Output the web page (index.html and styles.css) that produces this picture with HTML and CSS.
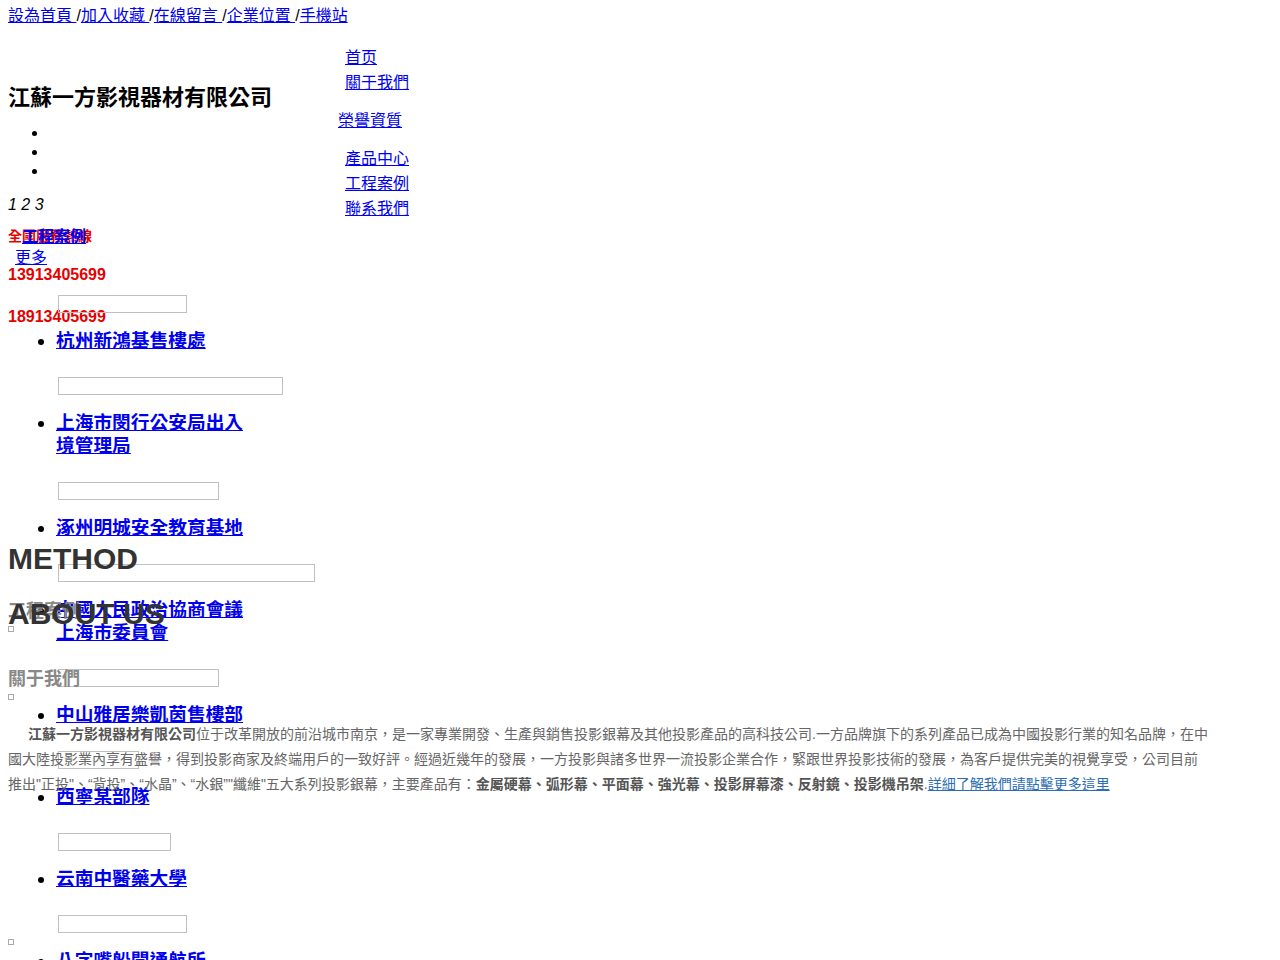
FILE: index.html
```html
<!DOCTYPE html>
<html lang="zh-Hant">
<head>
    <meta charset="UTF-8">
    <meta name="viewport" content="width=device-width, initial-scale=1.0">
    <title>江蘇一方影視器材有限公司</title>
    <link rel="stylesheet" href="styles.css">
</head>
<body>
<div class="page">
    <div class="toplinks">
        <a href="#">設為首頁 </a>/<a href="#">加入收藏 </a>/<a href="#">在線留言 </a>/<a href="#">企業位置 </a>/<a href="#">手機站</a>
    </div>

    <div class="header">
        <div class="left">
            <div class="logo">江蘇一方影視器材有限公司</div>
            <ul class="banner">
                <li></li>
                <li></li>
                <li></li>
            </ul>
            <div class="pager"><i>1 2 3</i></div>

            <div class="hotline">
                <div class="hot-title">全國服務熱線</div>
                <div class="hot-num">13913405699</div>
                <div class="hot-num second">18913405699</div>
            </div>

            <div class="cases">
                <div class="case-title"><a href="#">工程案例</a></div>
                <div class="more"><a href="#">更多</a></div>
                <ul class="case-list">
                    <li><span class="pic" style="width: 127px"></span><h3><a href="#">杭州新鴻基售樓處</a></h3></li>
                    <li><span class="pic" style="width: 223px"></span><h3><a href="#">上海市閔行公安局出入境管理局</a></h3></li>
                    <li><span class="pic" style="width: 159px"></span><h3><a href="#">涿州明城安全教育基地</a></h3></li>
                    <li><span class="pic" style="width: 255px"></span><h3><a href="#">中國人民政治協商會議上海市委員會</a></h3></li>
                    <li><span class="pic" style="width: 159px"></span><h3><a href="#">中山雅居樂凱茵售樓部</a></h3></li>
                    <li><span class="pic" style="width: 79px"></span><h3><a href="#">西寧某部隊</a></h3></li>
                    <li><span class="pic" style="width: 111px"></span><h3><a href="#">云南中醫藥大學</a></h3></li>
                    <li><span class="pic" style="width: 127px"></span><h3><a href="#">八字嘴船閘通航所</a></h3></li>
                </ul>
            </div>
        </div>

        <div class="nav">
            <div class="nav-item"><a href="#">首页</a></div>
            <div class="nav-item"><a href="#">關于我們</a></div>
            <div class="nav-item shifted"><a href="#">榮譽資質</a></div>
            <div class="nav-item"><a href="#">產品中心</a></div>
            <div class="nav-item"><a href="#">工程案例</a></div>
            <div class="nav-item"><a href="#">聯系我們</a></div>
        </div>
    </div>

    <div class="about">
        <h2 class="en">METHOD</h2>
        <div class="cn">工程案例</div>
        <div class="sq"></div>
        <h2 class="en over">ABOUT US</h2>
        <div class="cn second">關于我們</div>
        <div class="sq"></div>
        <p class="intro"><strong>江蘇一方影視器材有限公司</strong>位于改革開放的前沿城市南京，是一家專業開發、生產與銷售投影銀幕及其他投影產品的高科技公司.一方品牌旗下的系列產品已成為中國投影行業的知名品牌，在中國大陸投影業內享有盛譽，得到投影商家及終端用戶的一致好評。經過近幾年的發展，一方投影與諸多世界一流投影企業合作，緊跟世界投影技術的發展，為客戶提供完美的視覺享受，公司目前推出"正投"、“背投”、“水晶”、“水銀”"纖維"五大系列投影銀幕，主要產品有：<strong>金屬硬幕、弧形幕、平面幕、強光幕、投影屏幕漆、反射鏡、投影機吊架</strong>.<a href="#">詳細了解我們請點擊更多這里</a></p>
        <div class="sq last"></div>
    </div>
</div>
</body>
</html>
```

FILE: styles.css
```css
body {
    margin: 0;
    padding: 7px 8px 6px;
    font-family: "Liberation Sans", "Noto Sans CJK TC", sans-serif;
    font-size: 16px;
    color: #000;
    background-color: #fff;
}

a {
    color: #0000ee;
}

.page {
    position: relative;
}

.toplinks {
    line-height: 18px;
}

.header {
    display: flex;
    margin-top: 20px;
}

.left {
    position: relative;
    width: 337px;
}

.logo {
    margin-top: 38px;
    font-size: 22px;
    font-weight: bold;
    line-height: 30px;
}

.banner {
    margin: 10px 0 0;
    padding-left: 40px;
    line-height: 19px;
}

.banner li {
    height: 19px;
}

.pager {
    margin-top: 15px;
    line-height: 20px;
}

/* hotline box sits under the case block */
.hotline {
    position: absolute;
    top: 183px;
    left: 0;
    color: #e60000;
    font-weight: bold;
}

.hot-title {
    font-size: 14px;
    line-height: 16px;
}

.hot-num {
    margin-top: 21px;
    line-height: 20px;
}

.hot-num.second {
    margin-top: 22px;
}

.cases {
    position: relative;
    z-index: 1;
    margin-top: 12px;
}

.case-title {
    padding-left: 14px;
    font-weight: bold;
    line-height: 20px;
}

.more {
    margin-top: 1px;
    padding-left: 7px;
    line-height: 20px;
}

.case-list {
    margin: 27px 0 0;
    padding-left: 48px;
    list-style: none;
}

.case-list li {
    width: 200px;
}

.pic {
    display: block;
    height: 16px;
    margin-left: 2px;
    border: 1px solid #c0c0c0;
}

.case-list h3 {
    display: list-item;
    list-style: disc outside;
    margin: 16px 0 25px;
    font-size: 18.72px;
    line-height: 23px;
}

.nav {
    line-height: 25px;
}

.nav-item.shifted {
    margin: 13px 0 13px -7px;
}

.about {
    position: absolute;
    z-index: 2;
    top: 534px;
    left: 0;
    width: 1202px;
}

.about .en {
    margin: 0;
    font-size: 30px;
    line-height: 36px;
    color: #333;
}

.about .en.over {
    margin-top: -36px;
}

.about .cn {
    margin-top: 22px;
    font-size: 18px;
    font-weight: bold;
    line-height: 24px;
    color: #888;
}

.about .cn.second {
    margin-top: 35px;
}

.sq {
    width: 4px;
    height: 4px;
    margin-top: 3px;
    border: 1px solid #aaa;
}

.intro {
    margin: 22px 0 0;
    font-size: 14px;
    line-height: 25px;
    color: #666;
    text-indent: 20px;
}

.intro strong {
    color: #555;
}

.intro a {
    color: #2a6db5;
}

.sq.last {
    margin-top: 142px;
}
```
